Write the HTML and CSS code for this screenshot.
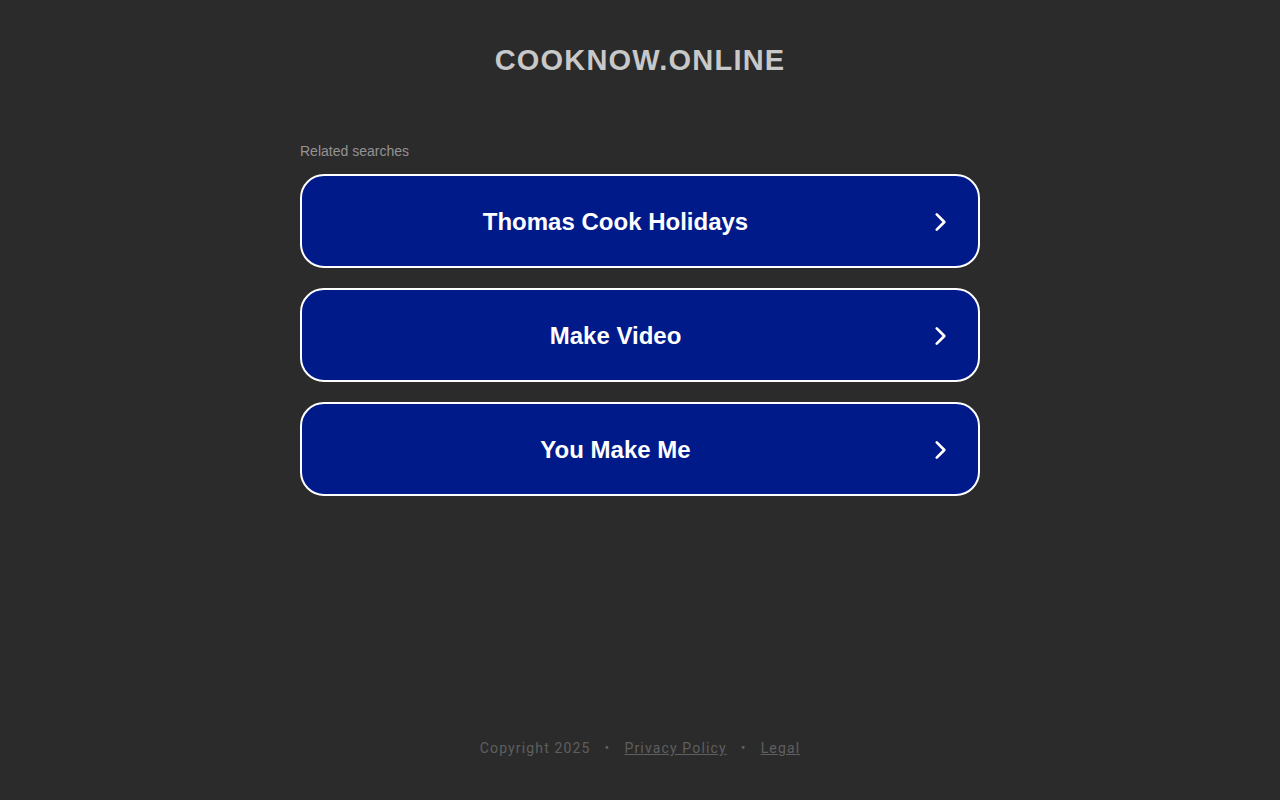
FILE: index.html
```html
<!DOCTYPE html>
<html>
<head>
<meta charset="utf-8">
<link rel="stylesheet" href="styles.css">
</head>
<body>
<div class="page">
  <header class="header"><h1 class="domain">COOKNOW.ONLINE</h1></header>
  <main class="main">
    <div class="related">Related searches</div>
    <div class="list">
      <a class="item" href="#"><span class="label">Thomas Cook Holidays</span><svg class="chev" viewBox="0 0 24 24" width="26" height="26"><path d="M9 5l7 7-7 7" fill="none" stroke="#fff" stroke-width="2.5" stroke-linecap="round" stroke-linejoin="round"/></svg></a>
      <a class="item" href="#"><span class="label">Make Video</span><svg class="chev" viewBox="0 0 24 24" width="26" height="26"><path d="M9 5l7 7-7 7" fill="none" stroke="#fff" stroke-width="2.5" stroke-linecap="round" stroke-linejoin="round"/></svg></a>
      <a class="item" href="#"><span class="label">You Make Me</span><svg class="chev" viewBox="0 0 24 24" width="26" height="26"><path d="M9 5l7 7-7 7" fill="none" stroke="#fff" stroke-width="2.5" stroke-linecap="round" stroke-linejoin="round"/></svg></a>
    </div>
  </main>
  <footer class="footer">
    <span>Copyright 2025</span><span class="dot">•</span><a href="#">Privacy Policy</a><span class="dot">•</span><a href="#">Legal</a>
  </footer>
</div>
</body>
</html>
```

FILE: styles.css
```css
html, body {
  margin: 0;
  padding: 0;
  background: #2b2b2b;
}
body {
  font-family: "Liberation Sans", Arial, sans-serif;
}
.page {
  height: 800px;
  display: flex;
  flex-direction: column;
  align-items: center;
}
.header {
  padding-top: 42px;
  height: 100px;
  box-sizing: border-box;
}
.domain {
  margin: 0;
  font-size: 29px;
  line-height: 36px;
  font-weight: bold;
  letter-spacing: 1.2px;
  color: #c8c8c8;
}
.main {
  width: 680px;
  padding-top: 42px;
}
.related {
  font-size: 14px;
  line-height: 18px;
  color: #939393;
  margin-bottom: 14px;
}
.list {
  display: flex;
  flex-direction: column;
  gap: 20px;
}
.item {
  height: 94px;
  box-sizing: border-box;
  border: 2px solid #fff;
  border-radius: 24px;
  background: #011a8a;
  display: flex;
  align-items: center;
  text-decoration: none;
  padding: 2px 25px 0 22px;
}
.label {
  flex: 1;
  text-align: center;
  color: #fff;
  font-size: 24px;
  font-weight: bold;
}
.chev {
  flex: none;
  margin-left: 20px;
}
.footer {
  margin-top: auto;
  margin-bottom: 44px;
  font-family: Roboto, "Liberation Sans", sans-serif;
  font-size: 14px;
  letter-spacing: 1.15px;
  color: #5f5f5f;
  display: flex;
}
.footer a {
  color: #5f5f5f;
  text-decoration: underline;
}
.dot {
  margin: 0 14px;
}
```
